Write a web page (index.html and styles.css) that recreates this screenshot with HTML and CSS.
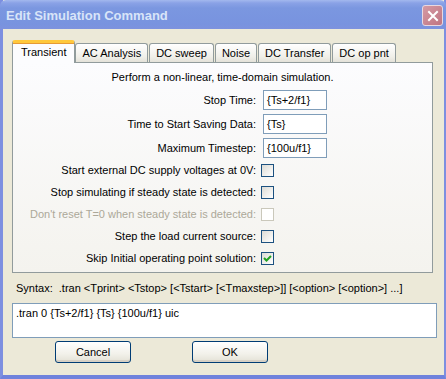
FILE: index.html
```html
<!DOCTYPE html>
<html lang="en">
<head>
  <meta charset="UTF-8">
  <title>Edit Simulation Command</title>
  <link rel="stylesheet" href="styles.css">
</head>
<body>
  <div class="window">
    <!-- title bar -->
    <div class="titlebar">
      <span class="title">Edit Simulation Command</span>
      <span class="close">
        <svg width="12" height="12" viewBox="0 0 12 12"><path d="M2 2 L10 10 M10 2 L2 10" stroke="#fff" stroke-width="2" stroke-linecap="square"/></svg>
      </span>
    </div>

    <div class="client">
      <ul class="tabs">
        <li class="tab active">Transient</li>
        <li class="tab">AC Analysis</li>
        <li class="tab">DC sweep</li>
        <li class="tab">Noise</li>
        <li class="tab">DC Transfer</li>
        <li class="tab">DC op pnt</li>
      </ul>

      <div class="panel">
        <p class="desc">Perform a non-linear, time-domain simulation.</p>
        <div class="fields">
          <label class="lbl">Stop Time:</label>
          <span class="input">{Ts+2/f1}</span>
          <label class="lbl">Time to Start Saving Data:</label>
          <span class="input">{Ts}</span>
          <label class="lbl">Maximum Timestep:</label>
          <span class="input">{100u/f1}</span>
        </div>
        <div class="checks">
          <label class="lbl">Start external DC supply voltages at 0V:</label>
          <span class="box"></span>
          <label class="lbl">Stop simulating if steady state is detected:</label>
          <span class="box"></span>
          <label class="lbl disabled">Don't reset T=0 when steady state is detected:</label>
          <span class="box off"></span>
          <label class="lbl">Step the load current source:</label>
          <span class="box"></span>
          <label class="lbl">Skip Initial operating point solution:</label>
          <span class="box">
            <svg width="11" height="11" viewBox="0 0 11 11"><path d="M2 5 L4.5 7.5 L9 3" fill="none" stroke="#21a121" stroke-width="2"/></svg>
          </span>
        </div>
      </div>

      <div class="syntax">Syntax:&nbsp; .tran &lt;Tprint&gt; &lt;Tstop&gt; [&lt;Tstart&gt; [&lt;Tmaxstep&gt;]] [&lt;option&gt; [&lt;option&gt;] ...]</div>
      <div class="cmd">.tran 0 {Ts+2/f1} {Ts} {100u/f1} uic</div>

      <div class="buttons">
        <button class="btn">Cancel</button>
        <button class="btn">OK</button>
      </div>
    </div>
  </div>
</body>
</html>
```

FILE: styles.css
```css
body {
  margin: 0;
  font-family: "Liberation Sans", Arial, sans-serif;
  font-size: 11px;
  color: #000;
}

/* window frame */
.window {
  width: 446px;
  height: 379px;
  box-sizing: border-box;
  background-color: #ece9d8;
  border-left: 3px solid #7d8fe0;
  border-right: 2px solid #7d8fe0;
  border-bottom: 4px solid #6f82dc;
  display: flex;
  flex-direction: column;
}

.titlebar {
  height: 29px;
  margin-left: -3px;
  margin-right: -2px;
  padding: 0 3px 0 6px;
  display: flex;
  align-items: center;
  justify-content: space-between;
  background: linear-gradient(#a3b8ee 0, #8aa2e6 3px, #7b97e0 8px, #7893df 24px, #7d92de 29px);
  border-radius: 6px 6px 0 0;
}

.title {
  color: #d8e4f8;
  font-weight: bold;
  font-size: 13px;
  padding-top: 1px;
}

.close {
  width: 19px;
  height: 19px;
  margin-top: 2px;
  border: 1px solid #e8d8e0;
  border-radius: 3px;
  background: linear-gradient(135deg, #d49aa4, #c07482);
  display: flex;
  align-items: center;
  justify-content: center;
}

.client {
  padding: 11px 9px 0 9px;
}

/* tabs */
.tabs {
  list-style: none;
  margin: 0;
  padding: 0;
  display: flex;
  align-items: flex-end;
  height: 22px;
  position: relative;
  z-index: 1;
}

.tab {
  height: 18px;
  line-height: 18px;
  padding: 0 6px;
  margin-right: 1px;
  border: 1px solid #919b9c;
  border-bottom: none;
  border-radius: 3px 3px 0 0;
  background: linear-gradient(#ffffff, #f0efe9 70%, #e4e2d9);
}

.tab.active {
  line-height: 19px;
  padding: 0 8px 1px 8px;
  margin-right: 0;
  background: #fcfcfe;
  border-top: 3px solid #ffc83c;
  box-shadow: inset 0 1px 0 #e69a35;
  height: 19px;
  margin-bottom: -1px;
}

.panel {
  height: 209px;
  border: 1px solid #919b9c;
  background: linear-gradient(#fcfcfe, #f4f3ee);
  width: 419px;
}

.desc {
  margin: 7px 0 0 0;
  text-align: center;
  line-height: 14px;
}

.fields,
.checks {
  display: grid;
  grid-template-columns: 243px auto;
  column-gap: 5px;
  align-items: center;
  justify-items: start;
}

.fields {
  margin-top: 6px;
  row-gap: 4px;
}

.checks {
  margin-top: 1px;
  grid-auto-rows: 22px;
}

.lbl {
  justify-self: end;
}

.lbl.disabled {
  color: #aca899;
}

.input {
  margin-left: 2px;
  width: 56px;
  height: 18px;
  line-height: 18px;
  padding: 0 3px;
  border: 1px solid #7f9db9;
  background: #fff;
}

.box {
  width: 11px;
  height: 11px;
  border: 1px solid #1c5180;
  background: linear-gradient(135deg, #dcdbd5, #fff);
  display: flex;
  align-items: center;
  justify-content: center;
}

.box.off {
  border-color: #cac8bb;
  background: #fff;
}

.syntax {
  margin: 8px 0 0 4px;
  line-height: 14px;
}

.cmd {
  margin-top: 8px;
  height: 30px;
  padding: 3px 3px 0 3px;
  border: 1px solid #7f9db9;
  background: #fff;
  width: 417px;
}

.buttons {
  display: flex;
  gap: 61px;
  padding-left: 43px;
  margin-top: 3px;
}

.btn {
  width: 76px;
  height: 22px;
  font-family: "Liberation Sans", Arial, sans-serif;
  font-size: 11px;
  color: #000;
  border: 1px solid #003c74;
  border-radius: 3px;
  background: linear-gradient(#ffffff, #f2f1ea 60%, #e3e1d5);
  box-shadow: inset 0 -2px 0 #d6d0c5;
}
```
